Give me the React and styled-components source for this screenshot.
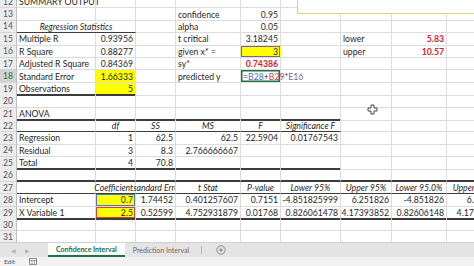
import React from "react";
import styled, { createGlobalStyle } from "styled-components";

const GlobalStyle = createGlobalStyle`
  body {
    margin: 0;
    background: #fff;
    font-family: Lato, "Liberation Sans", sans-serif;
  }
`;

const COLS = "17px 79px 40px 40px 65px 40px 60px 51px 55px 60px";

const Window = styled.div`
  width: 474px;
  height: 266px;
  overflow: hidden;
  position: relative;
  display: flex;
  flex-direction: column;
  background: #fff;
`;

const Viewport = styled.div`
  flex: 0 0 242px;
  overflow: hidden;
`;

const Grid = styled.div`
  margin-top: -4px;
`;

const Row = styled.div`
  display: grid;
  grid-template-columns: ${COLS};
  height: 12.4px;
`;

const RowHead = styled.div`
  box-sizing: border-box;
  background: ${(p) => (p.$active ? "#d2d2d2" : "#ececec")};
  color: ${(p) => (p.$active ? "#1e6b3e" : "#555")};
  border-right: 1px solid #bdbdbd;
  border-bottom: 1px solid #d6d6d6;
  font-size: 8.5px;
  display: flex;
  align-items: center;
  justify-content: center;
`;

const borderFor = (b) =>
  b === "thick" ? "2px solid #3c3c3c" : b === "thin" ? "1px solid #3c3c3c" : "1px solid #dcdcdc";

const Cell = styled.div`
  box-sizing: border-box;
  grid-column: span ${(p) => p.$span || 1};
  border-right: 1px solid ${(p) => (p.$fill ? p.$fill : "#dcdcdc")};
  border-bottom: ${(p) => borderFor(p.$bb)};
  background: ${(p) => p.$fill || "transparent"};
  box-shadow: ${(p) => (p.$ring ? `inset 0 0 0 ${p.$ringW || 1}px ${p.$ring}` : "none")};
  display: flex;
  align-items: center;
  justify-content: ${(p) =>
    p.$al === "r" ? "flex-end" : p.$al === "c" ? "center" : "flex-start"};
  padding: 0 2px;
  white-space: nowrap;
  font-size: 8.7px;
  font-weight: ${(p) => (p.$b ? 700 : 400)};
  font-style: ${(p) => (p.$i ? "italic" : "normal")};
  color: ${(p) => p.$c || "#1f1f1f"};
  overflow: ${(p) => (p.$clip ? "hidden" : "visible")};
  clip-path: ${(p) => (p.$clipRight ? "inset(0 0 0 -30px)" : "none")};
`;

const F = styled.span`
  color: ${(p) => p.$c};
`;

const TextBox = styled.div`
  position: absolute;
  left: 297px;
  top: -2px;
  width: 200px;
  height: 14px;
  background: #fff;
  border: 1px solid #e3d06c;
`;

const Cursor = styled.svg`
  position: absolute;
  left: 367px;
  top: 104px;
`;

const TabBar = styled.div`
  flex: 0 0 14px;
  background: #e4e4e4;
  border-top: 1px solid #d0d0d0;
  display: flex;
  align-items: stretch;
  font-size: 7px;
`;

const NavArrows = styled.div`
  width: 48px;
  display: flex;
  align-items: center;
  gap: 9px;
  padding-left: 11px;
  box-sizing: border-box;
  color: #b4b4b4;
  font-size: 6px;
`;

const Tab = styled.div`
  display: flex;
  align-items: center;
  padding: 0 8px;
  color: ${(p) => (p.$active ? "#1e6b3e" : "#666")};
  font-weight: ${(p) => (p.$active ? 700 : 400)};
  background: ${(p) => (p.$active ? "#fff" : "transparent")};
  border-bottom: ${(p) => (p.$active ? "2px solid #1e7145" : "none")};
  box-sizing: border-box;
`;

const Divider = styled.div`
  width: 1px;
  margin: 3px 0 3px 4px;
  background: #b8b8b8;
`;

const AddSheet = styled.div`
  margin-left: 14px;
  display: flex;
  align-items: center;
`;

const StatusBar = styled.div`
  flex: 1;
  background: #f2f2f2;
  display: flex;
  align-items: center;
  gap: 14px;
  padding-left: 4px;
  font-size: 6.5px;
  color: #555;
`;

const RED = "#d6202f";
const YEL = "#ffff00";

// row number -> cells A..I
const rows = {
  12: [{ v: "SUMMARY OUTPUT" }],
  13: [{}, {}, {}, { v: "confidence" }, { v: "0.95", al: "r" }],
  14: [
    { v: "Regression Statistics", al: "c", i: true, span: 2, bb: "thin" },
    {},
    { v: "alpha" },
    { v: "0.05", al: "r" },
  ],
  15: [
    { v: "Multiple R" },
    { v: "0.93956", al: "r" },
    {},
    { v: "t critical" },
    { v: "3.18245", al: "r" },
    {},
    { v: "lower" },
    { v: "5.83", al: "r", b: true, c: RED },
  ],
  16: [
    { v: "R Square" },
    { v: "0.88277", al: "r" },
    {},
    { v: "given x* =" },
    { v: "3", al: "r", fill: YEL, ring: "#7e5fa6" },
    {},
    { v: "upper" },
    { v: "10.57", al: "r", b: true, c: RED },
  ],
  17: [
    { v: "Adjusted R Square" },
    { v: "0.84369", al: "r" },
    {},
    { v: "sy*" },
    { v: "0.74386", al: "r", b: true, c: RED },
  ],
  18: [
    { v: "Standard Error" },
    { v: "1.66333", al: "r", fill: YEL },
    {},
    { v: "predicted y" },
    { formula: true, ring: "#217346", ringW: 1.5 },
  ],
  19: [
    { v: "Observations", bb: "thick" },
    { v: "5", al: "r", fill: YEL, bb: "thick" },
  ],
  20: [],
  21: [
    { v: "ANOVA", bb: "thick" },
    { bb: "thick" },
    { bb: "thick" },
    { bb: "thick" },
    { bb: "thick" },
    { bb: "thick" },
  ],
  22: [
    { bb: "thin" },
    { v: "df", al: "c", i: true, bb: "thin" },
    { v: "SS", al: "c", i: true, bb: "thin" },
    { v: "MS", al: "c", i: true, bb: "thin" },
    { v: "F", al: "c", i: true, bb: "thin" },
    { v: "Significance F", al: "c", i: true, bb: "thin" },
  ],
  23: [
    { v: "Regression" },
    { v: "1", al: "r" },
    { v: "62.5", al: "r" },
    { v: "62.5", al: "r" },
    { v: "22.5904", al: "r" },
    { v: "0.01767543", al: "r" },
  ],
  24: [
    { v: "Residual" },
    { v: "3", al: "r" },
    { v: "8.3", al: "r" },
    { v: "2.766666667", al: "r" },
  ],
  25: [
    { v: "Total", bb: "thick" },
    { v: "4", al: "r", bb: "thick" },
    { v: "70.8", al: "r", bb: "thick" },
    { bb: "thick" },
    { bb: "thick" },
    { bb: "thick" },
  ],
  26: Array.from({ length: 9 }, () => ({ bb: "thick" })),
  27: [
    { bb: "thin" },
    { v: "Coefficients", al: "c", i: true, bb: "thin", clipRight: true },
    { v: "Standard Error", al: "c", i: true, bb: "thin", clip: true },
    { v: "t Stat", al: "c", i: true, bb: "thin" },
    { v: "P-value", al: "c", i: true, bb: "thin" },
    { v: "Lower 95%", al: "c", i: true, bb: "thin" },
    { v: "Upper 95%", al: "c", i: true, bb: "thin" },
    { v: "Lower 95.0%", al: "c", i: true, bb: "thin" },
    { v: "Upper 95.0%", al: "c", i: true, bb: "thin" },
  ],
  28: [
    { v: "Intercept" },
    { v: "0.7", al: "r", fill: YEL, ring: "#4a78c8" },
    { v: "1.74452", al: "r" },
    { v: "0.401257607", al: "r" },
    { v: "0.7151", al: "r" },
    { v: "-4.851825999", al: "r" },
    { v: "6.251826", al: "r" },
    { v: "-4.851826", al: "r" },
    { v: "6.251826", al: "r" },
  ],
  29: [
    { v: "X Variable 1", bb: "thick" },
    { v: "2.5", al: "r", fill: YEL, ring: "#c8434a", bb: "thick" },
    { v: "0.52599", al: "r", bb: "thick" },
    { v: "4.752931879", al: "r", bb: "thick" },
    { v: "0.01768", al: "r", bb: "thick" },
    { v: "0.826061478", al: "r", bb: "thick" },
    { v: "4.17393852", al: "r", bb: "thick" },
    { v: "0.82606148", al: "r", bb: "thick" },
    { v: "4.17393852", al: "r", bb: "thick" },
  ],
  30: [],
  31: [],
};

const Formula = () => (
  <>
    <F $c="#333">=</F>
    <F $c="#3f6fc9">B28</F>
    <F $c="#333">+</F>
    <F $c="#c8434a">B29</F>
    <F $c="#333">*</F>
    <F $c="#7e5fa6">E16</F>
  </>
);

const SheetRow = ({ n, cells }) => {
  const out = [];
  let col = 0;
  cells.forEach((c, idx) => {
    const span = c.span || 1;
    out.push(
      <Cell
        key={idx}
        $span={span}
        $al={c.al}
        $b={c.b}
        $i={c.i}
        $c={c.c}
        $fill={c.fill}
        $bb={c.bb}
        $ring={c.ring}
        $ringW={c.ringW}
        $clip={c.clip}
        $clipRight={c.clipRight}
      >
        {c.formula ? <Formula /> : c.v}
      </Cell>
    );
    col += span;
  });
  while (col < 9) {
    out.push(<Cell key={"e" + col} />);
    col++;
  }
  return (
    <Row>
      <RowHead $active={n === 18}>{n}</RowHead>
      {out}
    </Row>
  );
};

export default function App() {
  return (
    <>
      <GlobalStyle />
      <Window>
        <Viewport>
          <Grid>
            {Object.keys(rows).map((n) => (
              <SheetRow key={n} n={Number(n)} cells={rows[n]} />
            ))}
          </Grid>
        </Viewport>
        <TabBar>
          <NavArrows>
            <span>◀</span>
            <span>▶</span>
          </NavArrows>
          <Tab $active>Confidence Interval</Tab>
          <Tab>Prediction Interval</Tab>
          <Divider />
          <AddSheet>
            <svg width="10" height="10" viewBox="0 0 10 10">
              <circle cx="5" cy="5" r="4.2" fill="none" stroke="#777" strokeWidth="0.8" />
              <path d="M5 3v4M3 5h4" stroke="#777" strokeWidth="0.8" />
            </svg>
          </AddSheet>
        </TabBar>
        <StatusBar>
          <span>Edit</span>
          <svg width="8" height="7" viewBox="0 0 8 7">
            <rect x="0.5" y="0.5" width="7" height="6" fill="none" stroke="#777" strokeWidth="0.8" />
            <path d="M0.5 2.5h7M3 2.5v4M5.5 2.5v4" stroke="#777" strokeWidth="0.6" />
          </svg>
        </StatusBar>
        <TextBox />
        <Cursor width="11" height="11" viewBox="0 0 11 11">
          <path
            d="M4 1h3v3h3v3H7v3H4V7H1V4h3z"
            fill="#fff"
            stroke="#333"
            strokeWidth="0.9"
          />
        </Cursor>
      </Window>
    </>
  );
}
